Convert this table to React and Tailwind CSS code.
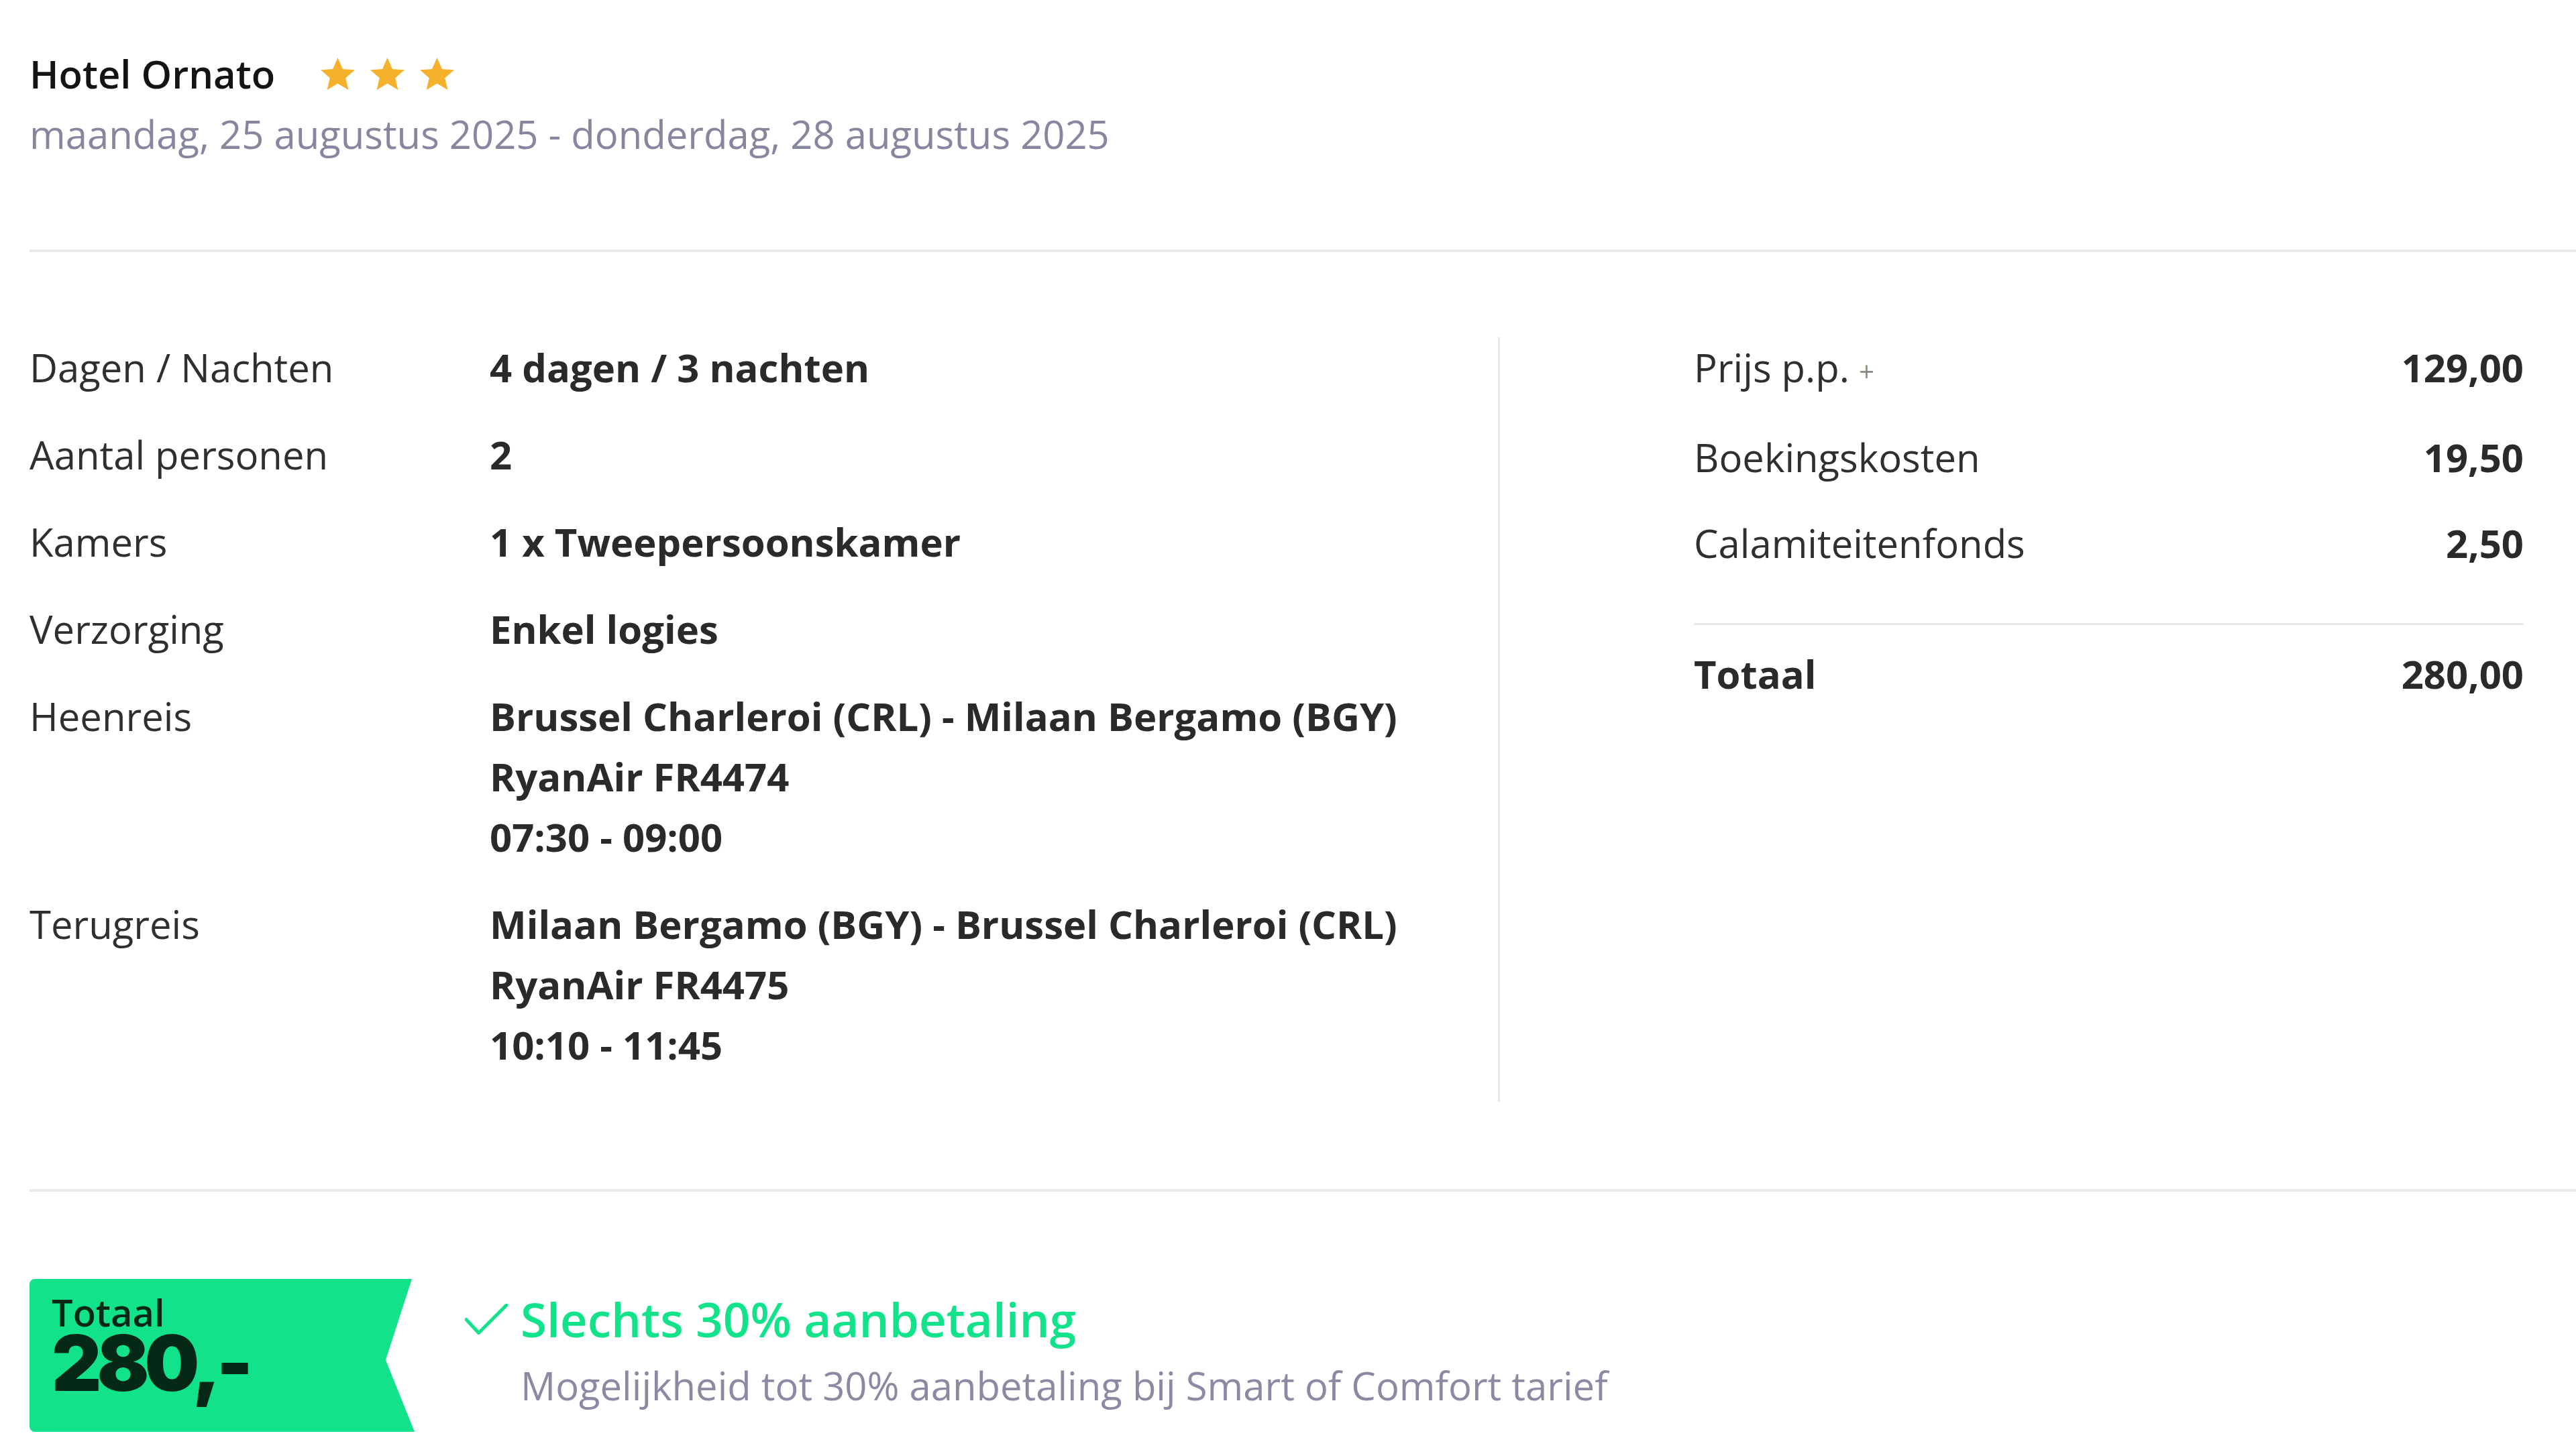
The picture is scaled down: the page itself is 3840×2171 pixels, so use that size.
import React from "react";

const tripRows = [
  { label: "Dagen / Nachten", lines: ["4 dagen / 3 nachten"] },
  { label: "Aantal personen", lines: ["2"] },
  { label: "Kamers", lines: ["1 x Tweepersoonskamer"] },
  { label: "Verzorging", lines: ["Enkel logies"] },
  {
    label: "Heenreis",
    lines: ["Brussel Charleroi (CRL) - Milaan Bergamo (BGY)", "RyanAir FR4474", "07:30 - 09:00"],
  },
  {
    label: "Terugreis",
    lines: ["Milaan Bergamo (BGY) - Brussel Charleroi (CRL)", "RyanAir FR4475", "10:10 - 11:45"],
  },
];

const costRows = [
  { label: "Prijs p.p.", value: "129,00", plus: true },
  { label: "Boekingskosten", value: "19,50" },
  { label: "Calamiteitenfonds", value: "2,50" },
];

const Star = () => (
  <svg width="51" height="48" viewBox="1.4 1 21.2 19.9" className="block">
    <polygon
      fill="#f6b12c"
      points="12,1 15.1,8 22.6,8.6 16.9,13.5 18.6,20.9 12,17 5.4,20.9 7.1,13.5 1.4,8.6 8.9,8"
    />
  </svg>
);

const App = () => {
  return (
    <div className="min-h-screen bg-white font-['Open_Sans',sans-serif] text-[58px] text-[#2f2f2f] pl-[44px] pt-[65px] overflow-hidden">
      {/* header */}
      <div className="flex items-center leading-[90px]">
        <h1 className="font-semibold text-[#141414]">Hotel Ornato</h1>
        <div className="flex items-center gap-[23px] ml-[68px]">
          <Star />
          <Star />
          <Star />
        </div>
      </div>
      <p className="leading-[90px] text-[#87869f]">
        maandag, 25 augustus 2025 - donderdag, 28 augustus 2025
      </p>

      <div className="mt-[127px] border-t-4 border-[#ebebeb]" />

      {/* details + prices */}
      <div className="flex mt-[127px]">
        <div className="w-[2189px] shrink-0">
          {tripRows.map((row) => (
            <div key={row.label} className="flex leading-[90px] pb-[40px]">
              <div className="w-[686px] shrink-0">{row.label}</div>
              <div className="font-bold text-[#2a2a2a]">
                {row.lines.map((line) => (
                  <div key={line}>{line}</div>
                ))}
              </div>
            </div>
          ))}
        </div>

        <div className="flex-1 border-l-[3px] border-[#e8e8e8] pl-[289px] pr-[78px]">
          {costRows.map((row) => (
            <div key={row.label} className="flex justify-between leading-[90px] pb-[38px]">
              <span>
                {row.label}
                {row.plus && <span className="ml-[14px] text-[40px] text-[#8a8a8a] align-middle">+</span>}
              </span>
              <span className="font-bold text-[#2a2a2a]">{row.value}</span>
            </div>
          ))}
          <div className="mt-[36px] border-t-[3px] border-[#e8e8e8]" />
          <div className="flex justify-between leading-[90px] pt-[28px] font-bold text-[#2a2a2a]">
            <span>Totaal</span>
            <span>280,00</span>
          </div>
        </div>
      </div>

      <div className="mt-[130px] border-t-4 border-[#ebebeb]" />

      {/* totaal badge */}
      <div className="flex items-start mt-[130px]">
        <div className="w-[574px] h-[228px] bg-[#12e38b] rounded-l-[8px] pl-[33px] pt-[22px] text-[#062816] [clip-path:polygon(0_0,99.3%_0,92.5%_53%,100%_100%,0_100%)]">
          <div className="leading-[54px] font-semibold text-[56px]">Totaal</div>
          <div className="leading-[100px] font-['Inter',sans-serif] font-black text-[115px] tracking-[-0.06em]">280,-</div>
        </div>

        <div className="ml-[75px] mt-[12px]">
          <div className="flex items-center gap-[19px]">
            <svg width="64" height="46" viewBox="0 0 64 46" className="block shrink-0">
              <polyline
                points="2,23.5 20.5,43.5 62,2"
                fill="none"
                stroke="#12e38b"
                strokeWidth="5"
                strokeLinecap="round"
                strokeLinejoin="round"
              />
            </svg>
            <span className="text-[71px] leading-[96px] font-semibold text-[#12e38b]">
              Slechts 30% aanbetaling
            </span>
          </div>
          <p className="pl-[83px] mt-[6px] leading-[90px] text-[#8c8aa3]">
            Mogelijkheid tot 30% aanbetaling bij Smart of Comfort tarief
          </p>
        </div>
      </div>
    </div>
  );
};

export default App;
